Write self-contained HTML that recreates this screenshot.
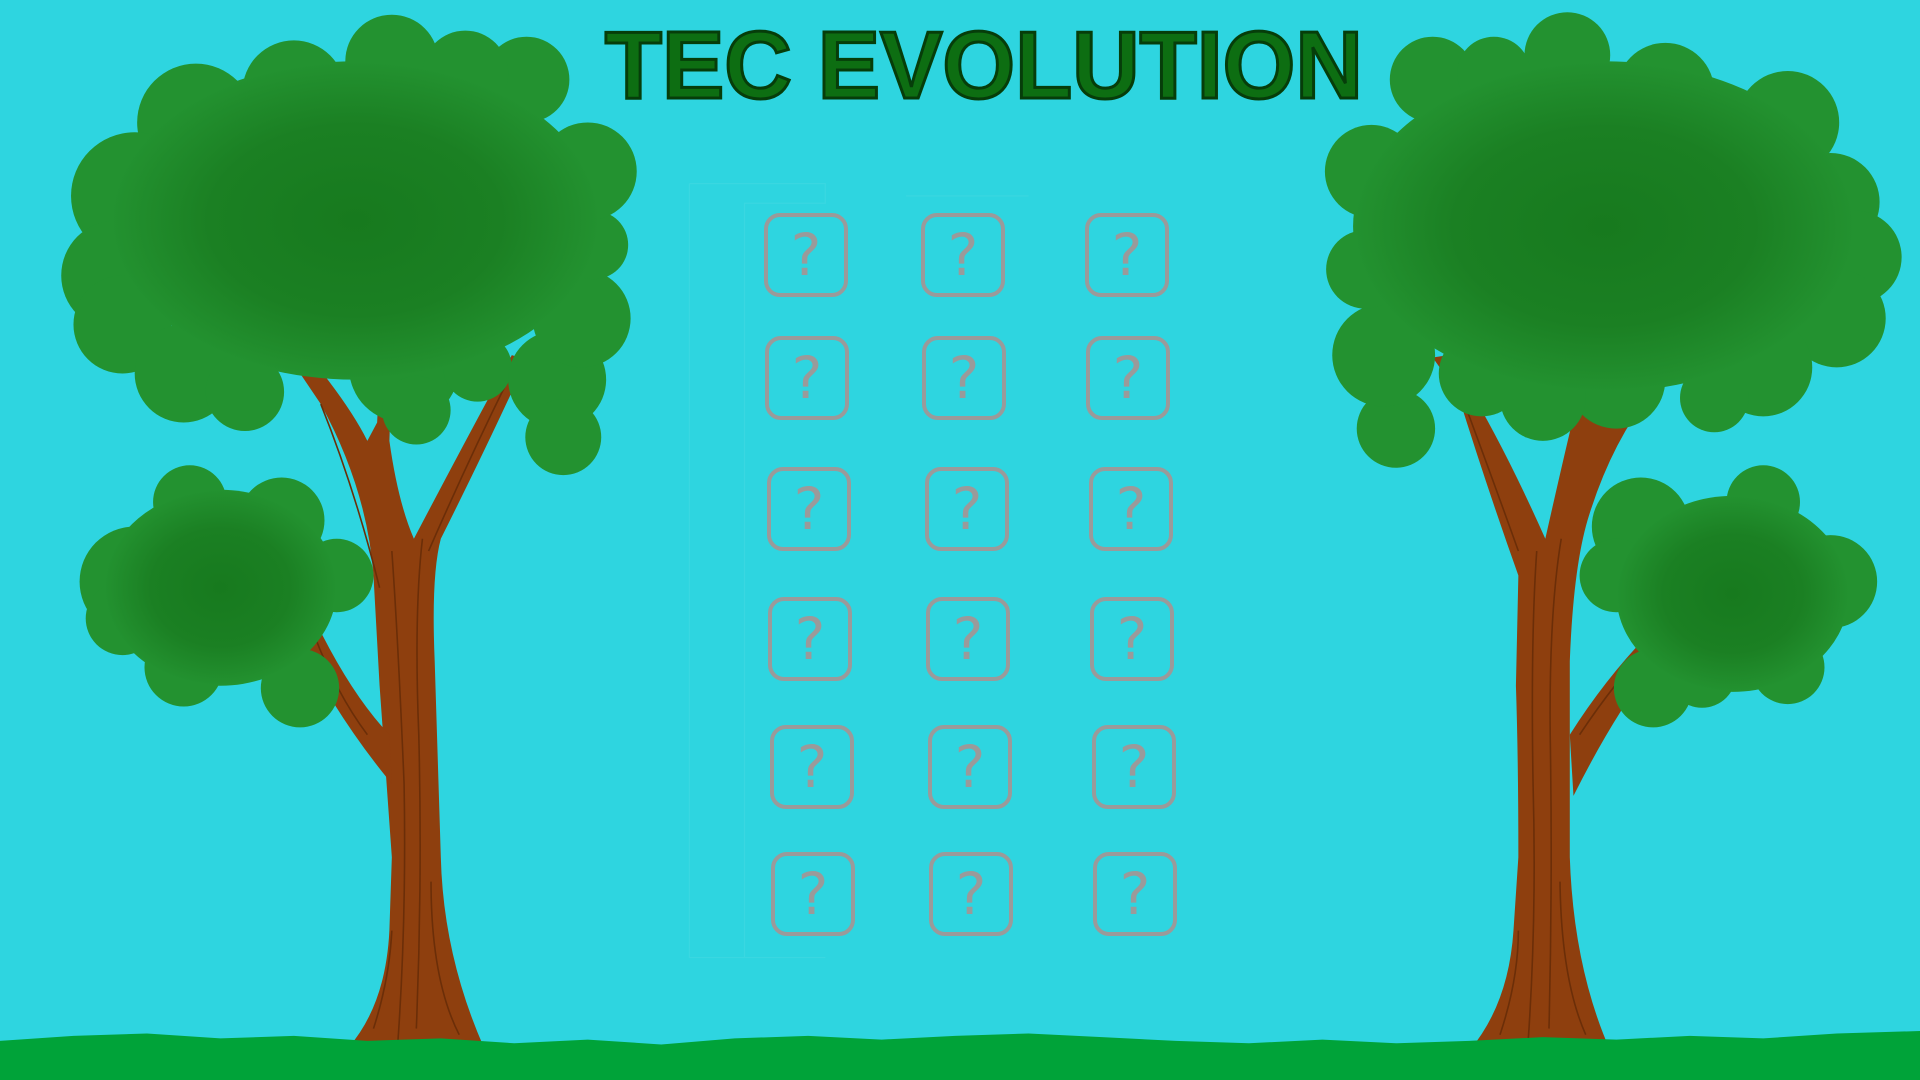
<!DOCTYPE html>
<html><head><meta charset="utf-8"><style>
html,body{margin:0;padding:0;width:1920px;height:1080px;overflow:hidden;background:#2ed5e0}
svg{position:absolute;left:0;top:0}
.b{position:absolute;width:76px;height:76px;border:4px solid #9a9a9a;border-radius:16px;color:#9a9a9a;font:58px "DejaVu Sans",sans-serif;text-align:center;line-height:76px}
</style></head><body>
<svg width="1920" height="1080" viewBox="0 0 1568 882">
<defs>
<radialGradient id="g" cx="0.5" cy="0.5" r="0.5"><stop offset="0" stop-color="#177a1e"/><stop offset="0.6" stop-color="#1b8023"/><stop offset="1" stop-color="#239230"/></radialGradient>
</defs>
<g fill="none" stroke="rgba(255,255,255,0.06)" stroke-width="1">
<path d="M563 150H674V166H608V782H674M563 150V782H608"/>
<path d="M740 160H840"/>
</g>
<!-- LEFT TREE trunk -->
<g fill="#8e3f0e">
<path d="M285 855 Q315 820 318 760 L320 700 Q315 630 310 560 L305 470 Q300 400 262 330 L235 290 L250 288 Q285 330 300 360 L308 345 L310 300 L320 300 L318 360 Q325 410 338 440 Q380 360 418 290 L430 294 Q400 360 360 440 Q352 470 355 540 L360 700 Q362 780 395 855 Z"/>
<path d="M318 600 Q280 560 245 480 L232 500 Q270 580 320 640 Z"/>
</g>
<g fill="none" stroke="#6b2e08" stroke-width="1.3">
<path d="M325 850 Q332 750 330 640 Q325 520 320 450"/><path d="M340 840 Q345 720 342 600 Q338 500 345 440"/><path d="M310 480 Q290 400 262 330"/><path d="M350 450 Q385 370 420 300"/><path d="M300 600 Q270 560 250 500"/><path d="M305 840 Q318 800 320 760"/><path d="M375 845 Q352 800 352 720"/>
</g>
<g fill="#239230">
<circle cx="320" cy="50" r="38"/><circle cx="430" cy="65" r="35"/><circle cx="240" cy="75" r="42"/><circle cx="160" cy="100" r="48"/><circle cx="110" cy="160" r="52"/><circle cx="95" cy="225" r="45"/><circle cx="100" cy="265" r="40"/><circle cx="150" cy="305" r="40"/><circle cx="200" cy="320" r="32"/><circle cx="265" cy="250" r="40"/><circle cx="330" cy="300" r="45"/><circle cx="340" cy="335" r="28"/><circle cx="390" cy="300" r="28"/><circle cx="455" cy="310" r="40"/><circle cx="460" cy="357" r="31"/><circle cx="475" cy="260" r="40"/><circle cx="485" cy="200" r="28"/><circle cx="480" cy="140" r="40"/><circle cx="380" cy="60" r="35"/>
<ellipse cx="290" cy="180" rx="200" ry="130" fill="url(#g)"/>
<circle cx="155" cy="410" r="30"/><circle cx="110" cy="475" r="45"/><circle cx="100" cy="505" r="30"/><circle cx="150" cy="545" r="32"/><circle cx="245" cy="562" r="32"/><circle cx="275" cy="470" r="30"/><circle cx="230" cy="425" r="35"/>
<ellipse cx="180" cy="480" rx="95" ry="80" fill="url(#g)"/>
</g>
<!-- RIGHT TREE -->
<g fill="#8e3f0e">
<path d="M1200 858 Q1232 820 1236 760 L1240 700 Q1240 620 1238 560 L1240 470 Q1215 400 1190 320 L1170 292 L1183 290 Q1222 350 1262 440 Q1280 360 1290 320 L1285 290 L1298 290 L1302 340 Q1320 310 1355 295 L1362 305 Q1320 350 1298 420 Q1285 460 1282 540 L1282 700 Q1285 790 1315 858 Z"/>
<path d="M1282 600 Q1320 540 1370 495 L1378 510 Q1330 560 1285 650 Z"/>
</g>
<g fill="none" stroke="#6b2e08" stroke-width="1.3">
<path d="M1248 850 Q1255 750 1252 640 Q1250 520 1255 450"/><path d="M1265 840 Q1268 720 1266 600 Q1265 500 1275 440"/><path d="M1240 450 Q1215 380 1185 300"/><path d="M1290 600 Q1330 540 1370 505"/><path d="M1225 845 Q1240 800 1240 760"/><path d="M1295 845 Q1275 800 1274 720"/>
</g>
<g fill="#239230">
<circle cx="1280" cy="45" r="35"/><circle cx="1170" cy="65" r="35"/><circle cx="1360" cy="75" r="40"/><circle cx="1460" cy="100" r="42"/><circle cx="1495" cy="165" r="40"/><circle cx="1515" cy="210" r="38"/><circle cx="1500" cy="260" r="40"/><circle cx="1440" cy="300" r="40"/><circle cx="1400" cy="325" r="28"/><circle cx="1320" cy="310" r="40"/><circle cx="1260" cy="325" r="35"/><circle cx="1210" cy="305" r="35"/><circle cx="1140" cy="350" r="32"/><circle cx="1130" cy="290" r="42"/><circle cx="1115" cy="220" r="32"/><circle cx="1120" cy="140" r="38"/><circle cx="1220" cy="60" r="30"/>
<ellipse cx="1310" cy="185" rx="205" ry="135" fill="url(#g)"/>
<circle cx="1440" cy="410" r="30"/><circle cx="1340" cy="430" r="40"/><circle cx="1320" cy="470" r="30"/><circle cx="1495" cy="475" r="38"/><circle cx="1460" cy="545" r="30"/><circle cx="1350" cy="562" r="32"/><circle cx="1390" cy="550" r="28"/>
<ellipse cx="1415" cy="485" rx="95" ry="80" fill="url(#g)"/>
</g>
<!-- grass -->
<path d="M0 850 L60 846 L120 844 L180 848 L240 846 L300 850 L360 848 L420 852 L480 849 L540 853 L600 848 L660 846 L720 849 L780 846 L840 844 L900 847 L960 850 L1020 852 L1080 849 L1140 852 L1200 850 L1260 847 L1320 849 L1380 846 L1440 848 L1500 844 L1568 842 V882 H0Z" fill="#00a339"/>
<text x="494" y="80" textLength="619" lengthAdjust="spacingAndGlyphs" font-family="Liberation Sans, sans-serif" font-weight="bold" font-size="78" fill="#0d6e12" stroke="#063d0a" stroke-width="2.5">TEC EVOLUTION</text>
</svg>
<div class="b" style="left:764px;top:213px">?</div><div class="b" style="left:921px;top:213px">?</div><div class="b" style="left:1085px;top:213px">?</div>
<div class="b" style="left:765px;top:336px">?</div><div class="b" style="left:922px;top:336px">?</div><div class="b" style="left:1086px;top:336px">?</div>
<div class="b" style="left:767px;top:467px">?</div><div class="b" style="left:925px;top:467px">?</div><div class="b" style="left:1089px;top:467px">?</div>
<div class="b" style="left:768px;top:597px">?</div><div class="b" style="left:926px;top:597px">?</div><div class="b" style="left:1090px;top:597px">?</div>
<div class="b" style="left:770px;top:725px">?</div><div class="b" style="left:928px;top:725px">?</div><div class="b" style="left:1092px;top:725px">?</div>
<div class="b" style="left:771px;top:852px">?</div><div class="b" style="left:929px;top:852px">?</div><div class="b" style="left:1093px;top:852px">?</div>
</body></html>
